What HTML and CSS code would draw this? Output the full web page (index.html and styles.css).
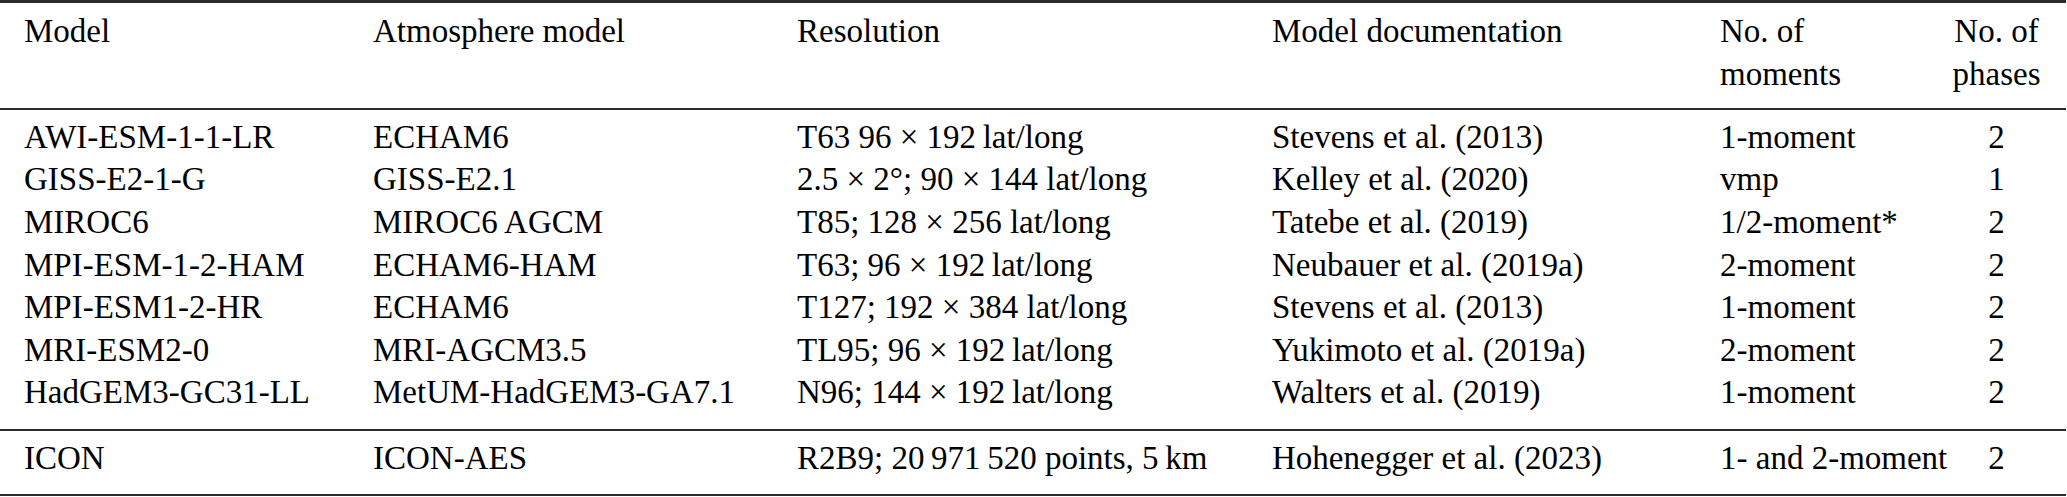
FILE: index.html
```html
<!DOCTYPE html>
<html lang="en">
<head>
    <meta charset="UTF-8">
    <meta name="viewport" content="width=device-width, initial-scale=1.0">
    <title>Models</title>
    <link rel="stylesheet" href="styles.css">
</head>
<body>
    <table class="models">
        <colgroup>
            <col class="c-model">
            <col class="c-atmos">
            <col class="c-res">
            <col class="c-doc">
            <col class="c-mom">
            <col class="c-ph">
        </colgroup>
        <thead>
            <tr>
                <th>Model</th>
                <th>Atmosphere model</th>
                <th>Resolution</th>
                <th>Model documentation</th>
                <th>No. of<br>moments</th>
                <th class="num">No. of<br>phases</th>
            </tr>
        </thead>
        <tbody>
            <tr>
                <td>AWI-ESM-1-1-LR</td>
                <td>ECHAM6</td>
                <td>T63 96 × 192&#8201;lat/long</td>
                <td>Stevens et al. (2013)</td>
                <td>1-moment</td>
                <td class="num">2</td>
            </tr>
            <tr>
                <td>GISS-E2-1-G</td>
                <td>GISS-E2.1</td>
                <td>2.5 × 2°; 90 × 144 lat/long</td>
                <td>Kelley et al. (2020)</td>
                <td>vmp</td>
                <td class="num">1</td>
            </tr>
            <tr>
                <td>MIROC6</td>
                <td>MIROC6 AGCM</td>
                <td>T85; 128 × 256 lat/long</td>
                <td>Tatebe et al. (2019)</td>
                <td>1/2-moment*</td>
                <td class="num">2</td>
            </tr>
            <tr>
                <td>MPI-ESM-1-2-HAM</td>
                <td>ECHAM6-HAM</td>
                <td>T63; 96 × 192&#8201;lat/long</td>
                <td>Neubauer et al. (2019a)</td>
                <td>2-moment</td>
                <td class="num">2</td>
            </tr>
            <tr>
                <td>MPI-ESM1-2-HR</td>
                <td>ECHAM6</td>
                <td>T127; 192 × 384 lat/long</td>
                <td>Stevens et al. (2013)</td>
                <td>1-moment</td>
                <td class="num">2</td>
            </tr>
            <tr>
                <td>MRI-ESM2-0</td>
                <td>MRI-AGCM3.5</td>
                <td>TL95; 96 × 192&#8201;lat/long</td>
                <td>Yukimoto et al. (2019a)</td>
                <td>2-moment</td>
                <td class="num">2</td>
            </tr>
            <tr>
                <td>HadGEM3-GC31-LL</td>
                <td>MetUM-HadGEM3-GA7.1</td>
                <td>N96; 144 × 192&#8201;lat/long</td>
                <td>Walters et al. (2019)</td>
                <td>1-moment</td>
                <td class="num">2</td>
            </tr>
        </tbody>
        <tbody class="extra">
            <tr>
                <td>ICON</td>
                <td>ICON-AES</td>
                <td>R2B9; 20&#8201;971&#8201;520 points, 5&#8201;km</td>
                <td>Hohenegger et al. (2023)</td>
                <td>1- and 2-moment</td>
                <td class="num">2</td>
            </tr>
        </tbody>
    </table>
</body>
</html>
```

FILE: styles.css
```css
body {
    margin: 0;
    padding: 0;
    background-color: #fff;
    color: #000;
    font-family: "Liberation Serif", "Times New Roman", serif;
}

.models {
    width: 2066px;
    table-layout: fixed;
    border-collapse: collapse;
    font-size: 33px;
    line-height: 42.6px;
}

.c-model { width: 373px; }
.c-atmos { width: 424px; }
.c-res   { width: 475px; }
.c-doc   { width: 448px; }
.c-mom   { width: 231px; }
.c-ph    { width: 115px; }

th, td {
    padding: 0;
    text-align: left;
    vertical-align: top;
    font-weight: normal;
    white-space: nowrap;
}

th:first-child, td:first-child {
    padding-left: 24px;
}

.models .num {
    text-align: center;
    padding-right: 24px;
}

thead tr {
    border-top: 3px solid #2b2b2b;
    border-bottom: 2px solid #2b2b2b;
}

thead th {
    padding-top: 7px;
    padding-bottom: 12.6px;
}

tbody tr:first-child td {
    padding-top: 6px;
}

tbody tr:last-child td {
    padding-bottom: 15.4px;
}

tbody.extra {
    border-top: 2px solid #2b2b2b;
    border-bottom: 2px solid #2b2b2b;
}

tbody.extra tr:last-child td {
    padding-bottom: 14px;
}
```
